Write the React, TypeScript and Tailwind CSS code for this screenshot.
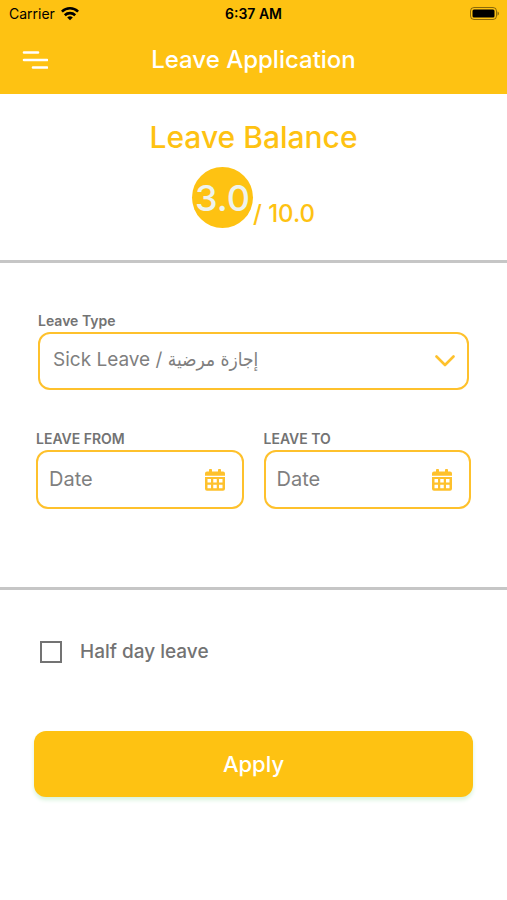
import { useState } from "react";

function StatusBar() {
  return (
    <div className="grid h-7 grid-cols-3 items-center px-2 text-sm text-black">
      <div className="flex items-center gap-1.5 px-px">
        <span>Carrier</span>
        <svg viewBox="0 0 18 14" className="h-3.5 w-[18px]" aria-hidden="true">
          <g fill="none" stroke="currentColor" strokeWidth="2.6">
            <path d="M0.9 4.6a11.6 11.6 0 0 1 16.2 0" />
            <path d="M3.8 8.2a7.5 7.5 0 0 1 10.4 0" />
          </g>
          <path d="M9 13.2 6.2 10.4a4.2 4.2 0 0 1 5.6 0z" fill="currentColor" />
        </svg>
      </div>
      <span className="text-center font-semibold">6:37 AM</span>
      <svg viewBox="0 0 30 14" className="h-3.5 w-[30px] justify-self-end" aria-hidden="true">
        <rect x="1.5" y="0.5" width="26" height="12" rx="3.5" fill="none" stroke="#000" strokeOpacity="0.45" />
        <rect x="3.5" y="2.5" width="22" height="8" rx="1.5" fill="#000" />
        <path d="M28.5 4.4v4.4c.9-.4 1.5-1.2 1.5-2.2s-.6-1.8-1.5-2.2z" fill="#000" fillOpacity="0.45" />
      </svg>
    </div>
  );
}

function Header() {
  return (
    <header className="bg-[#fec212]">
      <StatusBar />
      <div className="grid h-[66px] grid-cols-[48px_1fr_48px] items-center pb-0.5">
        <button type="button" aria-label="Open menu" className="flex justify-end text-white">
          <svg viewBox="0 0 26 20" className="h-5 w-[26px]" aria-hidden="true">
            <path
              d="M2 2.5h14M2 10h23M11 17.5h14"
              fill="none"
              stroke="currentColor"
              strokeWidth="2.6"
              strokeLinecap="round"
            />
          </svg>
        </button>
        <h1 className="text-center text-2xl font-medium text-white">Leave Application</h1>
      </div>
    </header>
  );
}

function LeaveBalance() {
  return (
    <section className="flex flex-col items-center border-b-3 border-[#c6c6c6] pt-[25px] pb-8 text-[#fec212]">
      <h2 className="text-3xl leading-9 font-medium">Leave Balance</h2>
      <div className="mt-3 flex items-end">
        <span className="flex size-[61px] items-center justify-center rounded-full bg-[#fec212] text-4xl font-medium text-[#eef3ee]">
          3.0
        </span>
        <span className="text-2xl leading-7 font-medium">/ 10.0</span>
      </div>
    </section>
  );
}

function CalendarIcon() {
  return (
    <svg viewBox="0 0 20 24" className="h-6 w-5" aria-hidden="true">
      <g fill="currentColor">
        <rect x="4" y="1" width="3" height="4" rx="0.8" />
        <rect x="13" y="1" width="3" height="4" rx="0.8" />
        <path d="M2 3.5h16a2 2 0 0 1 2 2v2.300H0V5.500a2 2 0 0 1 2-2z" />
        <path
          fillRule="evenodd"
          d="M0 9h20v11.800a2 2 0 0 1-2 2H2a2 2 0 0 1-2-2zM2.500 11v3.500H6V11zM8.250 11v3.500h3.500V11zM14 11v3.500h3.500V11zM2.500 16.800v3.500H6v-3.500zM8.250 16.800v3.500h3.500v-3.500zM14 16.800v3.500h3.500v-3.500z"
        />
      </g>
    </svg>
  );
}

function DateField({ id, label }: { id: string; label: string }) {
  return (
    <div className="min-w-0 flex-1">
      <label htmlFor={id} className="block text-sm leading-[22px] font-semibold">
        {label}
      </label>
      <div className="flex h-[59px] items-center rounded-xl border-2 border-[#fec12c] pr-[17px] pl-[11px]">
        <input
          id={id}
          type="text"
          placeholder="Date"
          className="min-w-0 flex-1 bg-transparent pb-0.5 text-xl outline-none placeholder:text-[#7f7f7f]"
        />
        <button type="button" aria-label={`Pick date for ${label}`} className="text-[#fec12c]">
          <CalendarIcon />
        </button>
      </div>
    </div>
  );
}

export default function App() {
  const [halfDay, setHalfDay] = useState(false);

  return (
    <main className="min-h-screen bg-white font-['Inter','DejaVu_Sans',sans-serif] text-[#737373]">
      <Header />
      <LeaveBalance />

      <form onSubmit={(e) => e.preventDefault()}>
        <div className="border-b-3 border-[#c6c6c6] px-9 pt-[47px] pb-[78px]">
          <label htmlFor="leave-type" className="block px-0.5 text-sm leading-[22px] font-semibold">
            Leave Type
          </label>
          <div className="grid items-center px-0.5">
            <select
              id="leave-type"
              className="col-start-1 row-start-1 h-[58px] w-full appearance-none rounded-xl border-2 border-[#fec12c] bg-transparent px-[13px] pb-0.5 font-['Inter','DejaVu_Sans_Condensed','DejaVu_Sans',sans-serif] text-[19px] text-[#7f7f7f] outline-none"
            >
              <option>Sick Leave / إجازة مرضية</option>
            </select>
            <svg
              viewBox="0 0 20 12"
              className="pointer-events-none col-start-1 row-start-1 mr-3.5 h-3 w-5 justify-self-end text-[#fec12c]"
              aria-hidden="true"
            >
              <path
                d="M1.5 1.5 10 10l8.5-8.5"
                fill="none"
                stroke="currentColor"
                strokeWidth="2.6"
                strokeLinecap="round"
                strokeLinejoin="round"
              />
            </svg>
          </div>

          <div className="mt-[38px] flex gap-5">
            <DateField id="leave-from" label="LEAVE FROM" />
            <DateField id="leave-to" label="LEAVE TO" />
          </div>
        </div>

        <div className="px-[34px] pt-12">
          <label className="flex w-fit items-center gap-[18px] px-1.5 text-[19px] leading-7 font-medium">
            <input
              type="checkbox"
              checked={halfDay}
              onChange={(e) => setHalfDay(e.target.checked)}
              className="size-[22px] appearance-none border-2 border-[#737373] checked:bg-[#fec212]"
            />
            Half day leave
          </label>
          <button
            type="submit"
            className="mt-[65px] h-[66px] w-full rounded-xl bg-[#fec212] text-[22px] font-medium text-white shadow-[0_3px_4px_#d8f3dc]"
          >
            Apply
          </button>
        </div>
      </form>
    </main>
  );
}
